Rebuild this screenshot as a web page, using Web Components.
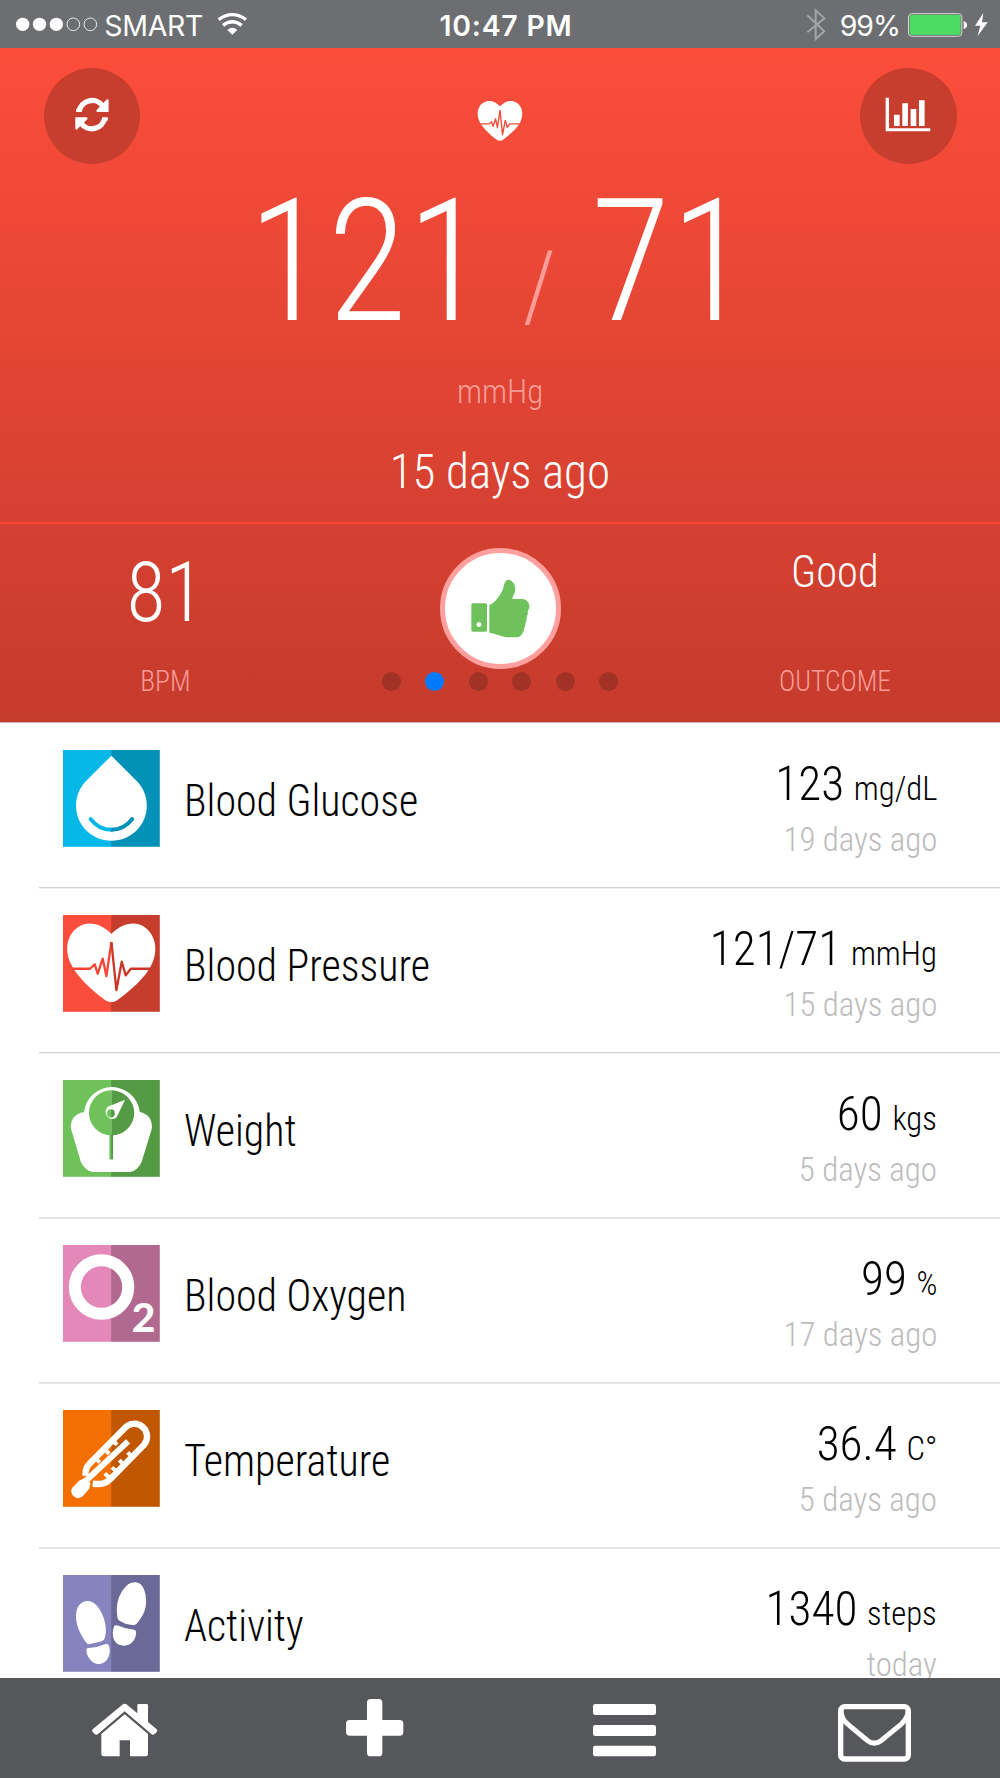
<!DOCTYPE html>
<html lang="en">
<head>
<meta charset="utf-8">
<title>Health</title>
<style>
html,body{margin:0;padding:0}
body{width:1000px;height:1778px;overflow:hidden;background:#fff;font-family:"Roboto Condensed",Roboto,"Liberation Sans",sans-serif;font-stretch:75%;font-weight:300;color:#000}
</style>
</head>
<body>
<health-app></health-app>
<script>
const define=(name,html,setup)=>{
  const t=document.createElement('template');t.innerHTML=html;
  customElements.define(name,class extends HTMLElement{
    constructor(){super();this.attachShadow({mode:'open'}).append(t.content.cloneNode(true))}
    connectedCallback(){if(setup)setup(this,this.shadowRoot)}
  });
};

define('status-bar',`
<style>
:host{display:flex;justify-content:space-between;height:48px;background:#6d6e71;color:#fff;font:400 28.5px/51px Inter,"Liberation Sans",sans-serif}
svg{display:block;height:48px;flex:none}
.l,.c,.r{display:flex;white-space:pre}
.l,.r{width:400px}
.c{font-weight:600;font-size:28.400px;letter-spacing:.77px;padding-left:12px}
.l span{width:104.700px;margin-left:-.7px;letter-spacing:-.35px}
.r{justify-content:flex-end}
.r span{letter-spacing:-1px;margin-left:9.500px}
</style>
<div class="l">
<svg width="105" viewBox="0 0 315 144"><g fill="#fff"><circle cx="68" cy="73" r="20"/><circle cx="118.500" cy="73" r="20"/><circle cx="169" cy="73" r="20"/></g><g fill="none" stroke="#fff" stroke-width="2.500"><circle cx="220" cy="73" r="19"/><circle cx="271" cy="73" r="19"/></g></svg>
<span>SMART</span>
<svg width="50" viewBox="627 0 150 144"><g fill="none" stroke="#fff" stroke-width="10"><path d="M656 59Q697 29 738 59"/><path d="M669 76Q697 54 725 76"/></g><path fill="#fff" d="M682 90Q697 77 712 90L697 104Z"/></svg>
</div>
<div class="c">10:47 PM</div>
<div class="r">
<svg width="28" viewBox="906 0 84 144"><path d="M922 46L973 94L947 117V31L973 55L922 97" fill="none" stroke="#a3a4a6" stroke-width="6"/></svg>
<span>99%</span>
<svg width="100" viewBox="1200 0 300 144"><rect x="1225.500" y="41" width="160" height="68" rx="10" fill="none" stroke="#d8d8da" stroke-width="3"/><rect x="1229" y="44" width="153" height="61" rx="6" fill="#4cd964"/><path d="M1391 63Q1401 66 1401 75T1391 87Z" fill="#fff"/><path d="M1450 39L1425 77H1441L1433 108L1463 67H1446Z" fill="#fff"/></svg>
</div>`);

define('round-button',`
<style>:host{display:flex;width:96.600px;height:96.600px;border-radius:50%;background:#c73d2e}::slotted(svg){display:block;width:96.600px;height:96.600px}</style><slot></slot>`);

define('page-dots',`
<style>:host{display:flex;gap:24.200px}i{width:19.300px;height:19.300px;border-radius:50%;background:#a23226}i.on{background:#007aff}</style>`,
(h,s)=>{const n=+h.getAttribute('count'),a=+h.getAttribute('active');for(let k=0;k<n;k++){const i=document.createElement('i');if(k===a)i.className='on';s.append(i)}});

define('hero-stat',`
<style>
:host{display:flex;flex-direction:column;align-items:center;width:331px;color:#fff;white-space:nowrap}
.v{height:142px;display:flex;align-items:flex-start}
.n{color:#ff9c98;font-size:29px;line-height:30px;transform:scaleX(.95)}
</style><div class="v"><slot></slot></div><div class="n"><slot name="name"></slot></div>`);

define('health-hero',`
<style>
:host{display:flex;flex-direction:column;height:674px;background:linear-gradient(#fc4d3b,#c53b2c);color:#fff}
.main{height:474px;display:flex;flex-direction:column;align-items:center;white-space:nowrap}
.bar{align-self:stretch;display:flex;justify-content:space-between;padding:19.700px 43.500px 0;height:96.600px}
.heart{width:46px;height:42px;margin-top:32.500px}
.big{display:flex;height:170px;margin:12.500px 1.400px 0 0;font-size:170px;line-height:170px;transform:scaleX(.962)}
.big .s{font-size:97px;color:#ff9c98;line-height:218px;padding:0 36.500px 0 37.600px}
.unit{margin-top:25.500px;font-size:33.500px;line-height:40px;color:#ff9c98;transform:scaleX(.98)}
.ago{margin-top:34.300px;font-size:49px;line-height:50px;transform:scaleX(.959)}
.sub{border-top:2px solid #fd4836;height:198px;display:flex;justify-content:space-between}
.p81{font-size:83px;line-height:84px;margin-top:26.500px;transform:scaleX(.965)}
.pg{font-size:43.500px;line-height:44px;margin-top:27.300px;transform:scaleX(.975)}
.mid{display:flex;flex-direction:column;align-items:center}
.thumb{box-sizing:border-box;width:121px;height:121px;border:5px solid #ffa09f;border-radius:50%;background:#fff;margin-top:24px;flex:none}
.thumb svg{display:block;width:111px;height:111px}
page-dots{margin-top:2.700px}
</style>
<div class="main">
<div class="bar">
<round-button><svg viewBox="131 203 290 290"><g fill="none" stroke="#fff" stroke-width="16"><path d="M236 334A40 41 0 0 1 308 318"/><path d="M314 352A40 41 0 0 1 242 368"/></g><g fill="#fff"><path d="M228 334Q226 334 228 325L246 325L243 335H230ZM320 297Q325 296 325 300V335H291Q286 333 289 329Z"/><path d="M321 351L323 353L322 361H304L307 351ZM230 388Q225 389 225 385V351H259Q264 353 261 357Z"/></g></svg></round-button>
<svg class="heart" viewBox="78 578 272 242"><path fill="#fff" d="M214 612C184 580 146 572 116 590C82 612 72 656 92 700C112 742 160 784 197 811Q214 820 230 811C267 784 318 742 336 700C356 656 344 612 312 590C282 572 244 580 214 612Z"/><path fill="none" stroke="#f44a38" stroke-width="8" stroke-linejoin="round" d="M98 716H150L164 703L173 731L188 686L199 738L214 636L229 780L245 695L257 736L272 716H330"/></svg>
<round-button><svg viewBox="1079 203 290 290"><path fill="#fff" d="M1156 292h10v92h124v9H1156ZM1181 343h17v34h-17ZM1206 309h17v68h-17ZM1231 326h17v51h-17ZM1256 300h17v77h-17Z"/></svg></round-button>
</div>
<div class="big"><span>121</span><span class="s">/</span><span>71</span></div>
<div class="unit">mmHg</div>
<div class="ago">15 days ago</div>
</div>
<div class="sub">
<hero-stat><span class="p81">81</span><span slot="name">BPM</span></hero-stat>
<div class="mid">
<div class="thumb"><svg viewBox="1334 130 333 333"><g fill="#6fc25b"><path fill-rule="evenodd" d="M1418 281H1456Q1460 281 1460 286V361Q1460 366 1456 366H1418Q1413 366 1413 361V286Q1413 281 1418 281ZM1436 337a7.500 7.500 0 1 0 .1 0Z"/><path d="M1467 286C1484 281 1503 253 1509 235C1512 222 1514 211 1524 210C1535 212 1545 222 1545 238C1545 250 1537 260 1536 268H1566C1580 269 1588 280 1587 292C1587 300 1582 301 1582 307C1584 315 1579 318 1579 325C1580 335 1574 338 1575 346C1575 352 1571 354 1571 360C1567 374 1560 382 1548 383H1526C1506 382 1490 373 1467 369Z"/></g></svg></div>
<page-dots count="6" active="1"></page-dots>
</div>
<hero-stat><span class="pg">Good</span><span slot="name">OUTCOME</span></hero-stat>
</div>`);

const TILE={
drop:['#05b8e8','#0491b8',`<path fill="#fff" d="M214 76L292 154C310 174 320 198 320 226C320 284 273 331 214 331S108 284 108 226C108 198 118 174 136 154Z"/><path fill="none" stroke="#05b8e8" stroke-width="12" stroke-linecap="round" d="M152 266C170 290 192 298 214 298"/><path fill="none" stroke="#0491b8" stroke-width="12" d="M213 298C236 298 258 290 276 266"/><circle cx="276" cy="266" r="6" fill="#0491b8"/>`],
heart:['#fb4d3c','#c63c2d',`<g transform="translate(0 -496)"><path fill="#fff" d="M214 612C184 580 146 572 116 590C82 612 72 656 92 700C112 742 160 784 197 811Q214 820 230 811C267 784 318 742 336 700C356 656 344 612 312 590C282 572 244 580 214 612Z"/><path fill="none" stroke="#fb4434" stroke-width="7" stroke-linejoin="round" d="M98 716H150L164 703L173 731L188 686L199 738L214 636"/><path fill="none" stroke="#cb3628" stroke-width="7" stroke-linejoin="round" d="M214 636L229 780L245 695L257 736L272 716H330"/></g>`],
scale:['#6fc25a','#559a44',`<path fill="#fff" d="M132 155A84 84 0 0 1 299 155C325 160 338 180 335 205L304 306Q292 330 270 335H158Q136 330 123 306L93 205C89 180 104 160 132 155Z"/><path fill="#6fc25a" d="M214 90A67 67 0 0 0 214 225Z"/><path fill="#559a44" d="M214 90A68 67 0 0 1 214 225Z"/><path fill="#6fc25a" d="M208 222h6v75h-6Z"/><path fill="#559a44" d="M213 222h6v75h-6Z"/><path fill="#fff" d="M255 118L230 170A20 21 0 1 1 203 139Z"/><path fill="#6fc25a" d="M213 147a12 12 0 0 0 0 24Z"/><path fill="#559a44" d="M213 147a11 12 0 0 1 0 24Z"/>`],
o2:['#e388b8','#b2698f',`<circle cx="184.500" cy="185" r="80" fill="none" stroke="#fff" stroke-width="36"/><text x="275" y="319" textLength="71" lengthAdjust="spacingAndGlyphs" fill="#fff" font-family="Lato" font-weight="900" font-size="120" font-stretch="100%">2</text>`],
thermo:['#f36f02','#c25702',`<g fill="none" stroke="#fff" stroke-width="19"><path d="M136 256C136 232 142 226 155 213L253 114A38 38 0 0 1 312 163L212 265C196 281 184 282 158 280"/></g><path stroke="#fff" stroke-width="18" d="M135 273L264 153"/><path fill="#fff" d="M118 270L136 262L151 278L148 294L129 317Q113 330 99 315Q89 302 97 292Z"/><path stroke="#fff" stroke-width="12" d="M164 200L179 216M191 174L207 190M215 148L231 163M263 186L272 196M238 209L250 222M216 231L225 240M194 249L208 261"/>`],
feet:['#8684bf','#6a6998',`<g transform="translate(0 -496)" fill="#fff"><path d="M142 633C162 632 178 652 188 676C199 702 200 728 193 747Q190 753 180 755L150 762Q142 764 136 754C120 730 108 706 108 677C108 650 122 634 142 633Z"/><path d="M139 779Q139 774 145 774Q174 772 197 762Q205 760 207 768C211 784 209 797 201 808C191 823 169 828 154 813Q139 797 139 779Z"/><path d="M286 577C306 578 318 600 318 636C317 662 308 680 289 702Q285 706 276 705Q255 703 238 692Q231 688 231 672C228 644 235 618 249 599Q265 576 286 577Z"/><path d="M222 708Q226 703 236 707Q256 717 282 719Q289 721 288 730C286 752 270 767 249 767C224 765 211 742 222 708Z"/></g>`]
};

define('metric-row',`
<style>
:host{display:flex;height:165px;padding:27.600px 63px 0 62.800px;box-sizing:border-box;white-space:nowrap}
.t{width:96.800px;height:96.800px;display:block;flex:none;overflow:visible}
.n{font-size:44px;line-height:50px;margin:26.200px 0 0 24.300px;flex:1;transform:scaleX(.954);transform-origin:0 0}
.r{display:flex;flex-direction:column;align-items:flex-end}
.v{display:flex;align-items:baseline;font-size:49px;line-height:60px;height:60px;margin-top:4.600px;transform:scaleX(.963);transform-origin:100% 0}
.u{font-size:34px;line-height:34px;margin-left:10px}
.a{font-size:34px;line-height:36px;color:#bcbcbc;margin-top:7px;transform:scaleX(.966);transform-origin:100% 0}
</style>
<svg class="t" viewBox="69 59 290 290"></svg>
<div class="n"><slot></slot></div>
<div class="r"><div class="v"><slot name="value"></slot><span class="u"><slot name="unit"></slot></span></div><div class="a"><slot name="ago"></slot></div></div>`,
(h,s)=>{const [a,b,p]=TILE[h.getAttribute('icon')];s.querySelector('svg').innerHTML='<rect x="69" y="59" width="145" height="290" fill="'+a+'"/><rect x="213" y="59" width="146" height="290" fill="'+b+'"/>'+p});

define('metric-list',`
<style>
:host{display:block;height:956px;overflow:hidden;background:linear-gradient(#c9b0ad,#c9b0ad) 0 0/100% 1px no-repeat #fff}
::slotted(metric-row:not(:first-child)){background:linear-gradient(#d3d3d5 50%,#efefef 50%) 38.500px 0/100% 2px no-repeat}
::slotted(metric-row:nth-child(n+4)){background-image:linear-gradient(#e4e4e5,#e4e4e5)}
</style><slot></slot>`);

define('tab-bar',`
<style>:host{display:flex;height:100px;background:#56575b}svg{display:block;width:250px;height:100px}</style>
<svg viewBox="0 24 750 300"><path fill="#fff" d="M367 104Q374 99 381 104L412 130V106Q412 102 416 102H440Q444 102 444 106V156L470 178Q474 182 470 186L464 192Q459 196 454 192L374 124L294 192Q289 196 284 192L278 186Q274 182 278 178Z"/><path fill="#fff" d="M374 133L444 192V252Q444 259 437 259H390V211H359V259H311Q304 259 304 252V192Z"/></svg>
<svg viewBox="750 24 750 300"><path fill="#fff" d="M1112 87H1136Q1147 87 1147 98V150H1199Q1210 150 1210 161V186Q1210 197 1199 197H1147V248Q1147 259 1136 259H1112Q1101 259 1101 248V197H1049Q1038 197 1038 186V161Q1038 150 1049 150H1101V98Q1101 87 1112 87Z"/></svg>
<svg viewBox="0 24 750 300"><g fill="#fff"><rect x="279" y="102" width="189" height="33" rx="7"/><rect x="279" y="165" width="189" height="33" rx="7"/><rect x="279" y="227" width="189" height="32" rx="7"/></g></svg>
<svg viewBox="750 24 750 300"><rect x="1022" y="110" width="203" height="157" rx="12" fill="none" stroke="#fff" stroke-width="16"/><path d="M1023 118Q1022 146 1044 163L1103 212Q1123 227 1143 212L1203 163Q1225 144 1225 118" fill="none" stroke="#fff" stroke-width="15"/></svg>`);

define('health-app',`
<style>:host{display:flex;flex-direction:column;width:1000px;height:1778px}</style>
<status-bar></status-bar>
<health-hero></health-hero>
<metric-list>
<metric-row icon="drop">Blood Glucose<span slot="value">123</span><span slot="unit">mg/dL</span><span slot="ago">19 days ago</span></metric-row>
<metric-row icon="heart">Blood Pressure<span slot="value">121/71</span><span slot="unit">mmHg</span><span slot="ago">15 days ago</span></metric-row>
<metric-row icon="scale">Weight<span slot="value">60</span><span slot="unit">kgs</span><span slot="ago">5 days ago</span></metric-row>
<metric-row icon="o2">Blood Oxygen<span slot="value">99</span><span slot="unit">%</span><span slot="ago">17 days ago</span></metric-row>
<metric-row icon="thermo">Temperature<span slot="value">36.4</span><span slot="unit">C°</span><span slot="ago">5 days ago</span></metric-row>
<metric-row icon="feet">Activity<span slot="value">1340</span><span slot="unit">steps</span><span slot="ago">today</span></metric-row>
</metric-list>
<tab-bar></tab-bar>`);
</script>
</body>
</html>
